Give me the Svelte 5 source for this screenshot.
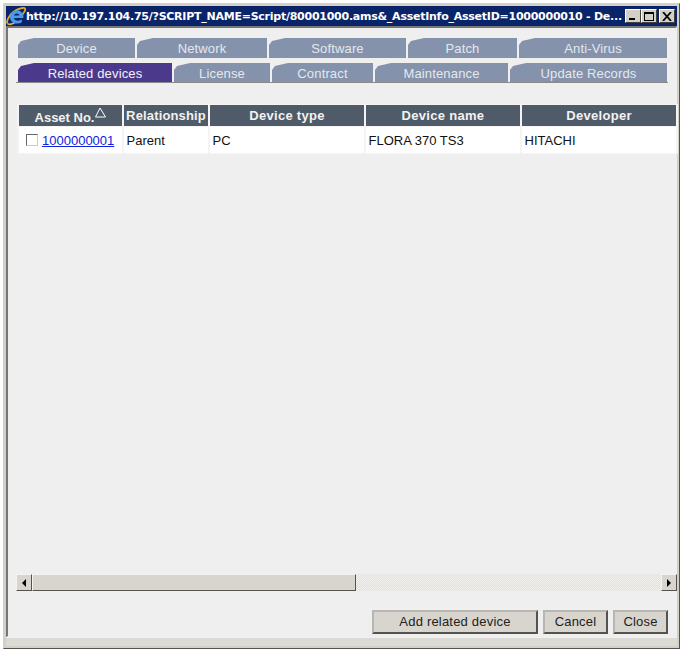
<script>
    const topTabs = [
        { label: 'Device', width: 117 },
        { label: 'Network', width: 130 },
        { label: 'Software', width: 137 },
        { label: 'Patch', width: 109 },
        { label: 'Anti-Virus', width: 148 }
    ];
    const bottomTabs = [
        { label: 'Related devices', width: 154, active: true },
        { label: 'License', width: 96 },
        { label: 'Contract', width: 101 },
        { label: 'Maintenance', width: 133 },
        { label: 'Update Records', width: 157 }
    ];
</script>

<div class="window">
    <div class="titlebar">
        <svg class="ie" width="20" height="20" viewBox="0 0 20 20">
            <path d="M1.500 17.500C0 15.500 3 9 8 5.500 12 2.500 18 1 19 2.500c.8 1.200-.5 3.500-2.500 6" fill="none" stroke="#e8a828" stroke-width="1.800" />
            <path d="M1.500 17.500c1.300 1.500 4.500.5 7-.8" fill="none" stroke="#f0b838" stroke-width="1.800" />
            <path d="M4 11a6.800 6.800 0 0 1 13.400-1.500v2.500H8c.4 3 4.500 3.600 7.800 1.200v3.300C10.500 19 4 17 4 11zm4-1.500h5.500C13 6.800 8.600 6.800 8 9.500z" fill="#4a9ae8" fill-rule="evenodd" />
        </svg>
        <span class="title">http://10.197.104.75/?SCRIPT_NAME=Script/80001000.ams&amp;_AssetInfo_AssetID=1000000010 - De...</span>
        <div class="controls">
            <button class="ctl"><span class="min"></span></button>
            <button class="ctl"><span class="max"></span></button>
            <button class="ctl close">
                <svg width="10" height="9" viewBox="0 0 10 9"><path d="M1 0l8 9M9 0L1 9" stroke="#000" stroke-width="1.800" fill="none" /></svg>
            </button>
        </div>
    </div>

    <div class="content">
        <div class="tabs">
            <div class="tabrow">
                {#each topTabs as tab}
                    <div class="tab" style="width: {tab.width}px">{tab.label}</div>
                {/each}
            </div>
            <div class="tabrow second">
                {#each bottomTabs as tab}
                    <div class="tab" class:active={tab.active} style="width: {tab.width}px">{tab.label}</div>
                {/each}
            </div>
        </div>

        <table>
            <thead>
                <tr>
                    <th class="c1">Asset No.<svg class="sort" width="11" height="11" viewBox="0 0 11 11"><path d="M5 1L.5 10h10z" fill="none" stroke="#fff" /></svg></th>
                    <th class="c2">Relationship</th>
                    <th class="c3">Device type</th>
                    <th class="c3">Device name</th>
                    <th>Developer</th>
                </tr>
            </thead>
            <tbody>
                <tr>
                    <td class="assetcell"><span class="check"></span><a href="#asset">1000000001</a></td>
                    <td>Parent</td>
                    <td>PC</td>
                    <td>FLORA 370 TS3</td>
                    <td>HITACHI</td>
                </tr>
            </tbody>
        </table>

        <div class="spacer"></div>

        <div class="scrollbar">
            <div class="sbtn"><span class="arrow left"></span></div>
            <div class="thumb"></div>
            <div class="track"></div>
            <div class="sbtn"><span class="arrow right"></span></div>
        </div>

        <div class="actions">
            <button class="btn add">Add related device</button>
            <button class="btn cancel">Cancel</button>
            <button class="btn closebtn">Close</button>
        </div>
    </div>
    <div class="status"></div>
</div>

<style>
    :global(body) {
        margin: 0;
        background: #fff;
    }

    .window {
        width: 677px;
        height: 646px;
        margin: 3px 0 0 3px;
        box-sizing: border-box;
        background: #d4d0c8;
        border: 1px solid #d4d0c8;
        border-right-color: #55534f;
        border-bottom-color: #55534f;
        padding: 2px;
        display: flex;
        flex-direction: column;
        font-family: "Liberation Sans", Arial, sans-serif;
    }

    .titlebar {
        height: 20px;
        flex: none;
        background: #0a246a;
        display: flex;
        align-items: center;
    }

    .ie {
        flex: none;
    }

    .title {
        color: #fff;
        font: bold 11px "DejaVu Sans", sans-serif;
        white-space: nowrap;
        overflow: hidden;
        flex: none;
        width: 598px;
        letter-spacing: -0.25px;
    }

    .controls {
        display: flex;
        flex: none;
        margin-left: auto;
        margin-right: 2px;
    }

    .ctl {
        width: 16px;
        height: 14px;
        flex: none;
        padding: 0;
        box-sizing: border-box;
        background: #d4d0c8;
        border: 1px solid;
        border-color: #fff #404040 #404040 #fff;
        display: flex;
        align-items: center;
        justify-content: center;
    }

    .close {
        margin-left: 2px;
    }

    .min {
        width: 6px;
        height: 2px;
        background: #000;
        margin-top: 6px;
        margin-right: 2px;
    }

    .max {
        width: 10px;
        height: 9px;
        box-sizing: border-box;
        border: 1px solid #000;
        border-top-width: 2px;
    }

    .content {
        flex: 1;
        min-height: 0;
        background: #efefef;
        border: 1px solid;
        border-color: #777 #eee #eee #777;
        border-left-width: 2px;
        border-top-width: 2px;
        display: flex;
        flex-direction: column;
        padding: 10px 0 0 9px;
        box-sizing: border-box;
    }

    .tabs {
        width: 652px;
        margin-left: -1px;
        padding: 0 0 0 2px;
        border-bottom: 1px solid #8a8a8a;
        box-sizing: border-box;
        flex: none;
    }

    .tabrow {
        display: flex;
        gap: 2px;
    }

    .second {
        margin-top: 5px;
    }

    .tab {
        height: 20px;
        line-height: 22px;
        flex: none;
        text-align: center;
        color: #e4e8ee;
        font-size: 13px;
        letter-spacing: 0.15px;
        background: #8492ac;
        clip-path: polygon(0 7px, 3px 3px, 16px 0, 100% 0, 100% 100%, 0 100%);
    }

    .second .tab {
        height: 19px;
        line-height: 22px;
    }

    .tab.active {
        background: #4b3a8c;
        color: #f2f0f8;
    }

    table {
        margin-top: 21px;
        width: 661px;
        flex: none;
        border-collapse: separate;
        border-spacing: 2px 1px;
        table-layout: fixed;
        background: #f4f4f4;
    }

    th {
        background: #4f5b68;
        color: #f2f2f2;
        height: 21px;
        padding: 0;
        font-weight: bold;
        font-size: 13px;
        letter-spacing: 0.3px;
        text-align: center;
        white-space: nowrap;
    }

    .c1 {
        width: 103px;
        letter-spacing: 0;
    }

    .c2 {
        width: 84px;
        letter-spacing: 0.15px;
    }

    .c3 {
        width: 154px;
    }

    .sort {
        vertical-align: 4px;
        margin-left: 1px;
    }

    td {
        background: #fff;
        height: 26px;
        padding: 0 0 0 2.500px;
        color: #111;
        font-size: 13px;
    }

    .assetcell {
        padding-left: 7px;
    }

    .check {
        display: inline-block;
        width: 10px;
        height: 10px;
        border: 1px solid;
        border-color: #666 #ccc #ccc #666;
        background: #fff;
        margin-right: 4px;
        vertical-align: -1px;
    }

    a {
        color: #1020e0;
    }

    .spacer {
        flex: 1;
    }

    .scrollbar {
        display: flex;
        flex: none;
        height: 17px;
        width: 661px;
        margin-left: -1px;
    }

    .sbtn,
    .thumb {
        background: #d8d5ce;
        box-sizing: border-box;
        border: 1px solid;
        border-color: #f4f3f0 #55534f #55534f #f4f3f0;
    }

    .sbtn {
        width: 16px;
        flex: none;
        display: flex;
        align-items: center;
        justify-content: center;
    }

    .thumb {
        width: 324px;
        flex: none;
    }

    .track {
        flex: 1;
        background: repeating-conic-gradient(#e2e0da 0 25%, #f2f1ee 0 50%) 0 0 / 2px 2px;
    }

    .arrow {
        width: 0;
        height: 0;
        border-top: 4px solid transparent;
        border-bottom: 4px solid transparent;
    }

    .arrow.left {
        border-right: 4px solid #000;
    }

    .arrow.right {
        border-left: 4px solid #000;
    }

    .actions {
        display: flex;
        flex: none;
        justify-content: flex-end;
        gap: 5px;
        margin-top: 19px;
        margin-bottom: 2px;
        padding-right: 8px;
    }

    .btn {
        height: 24px;
        padding: 0 0 2px;
        box-sizing: border-box;
        background: #d8d5ce;
        color: #222;
        border: 2px solid;
        border-color: #b8b6b0 #55534f #55534f #b8b6b0;
        font: 13px "Liberation Sans", Arial, sans-serif;
        letter-spacing: 0.2px;
    }

    .add {
        width: 166px;
    }

    .cancel {
        width: 65px;
    }

    .closebtn {
        width: 55px;
    }

    .status {
        height: 9px;
        flex: none;
        background: #dcdad5;
        border-top: 1px solid #f2f1ee;
        box-sizing: border-box;
    }
</style>
